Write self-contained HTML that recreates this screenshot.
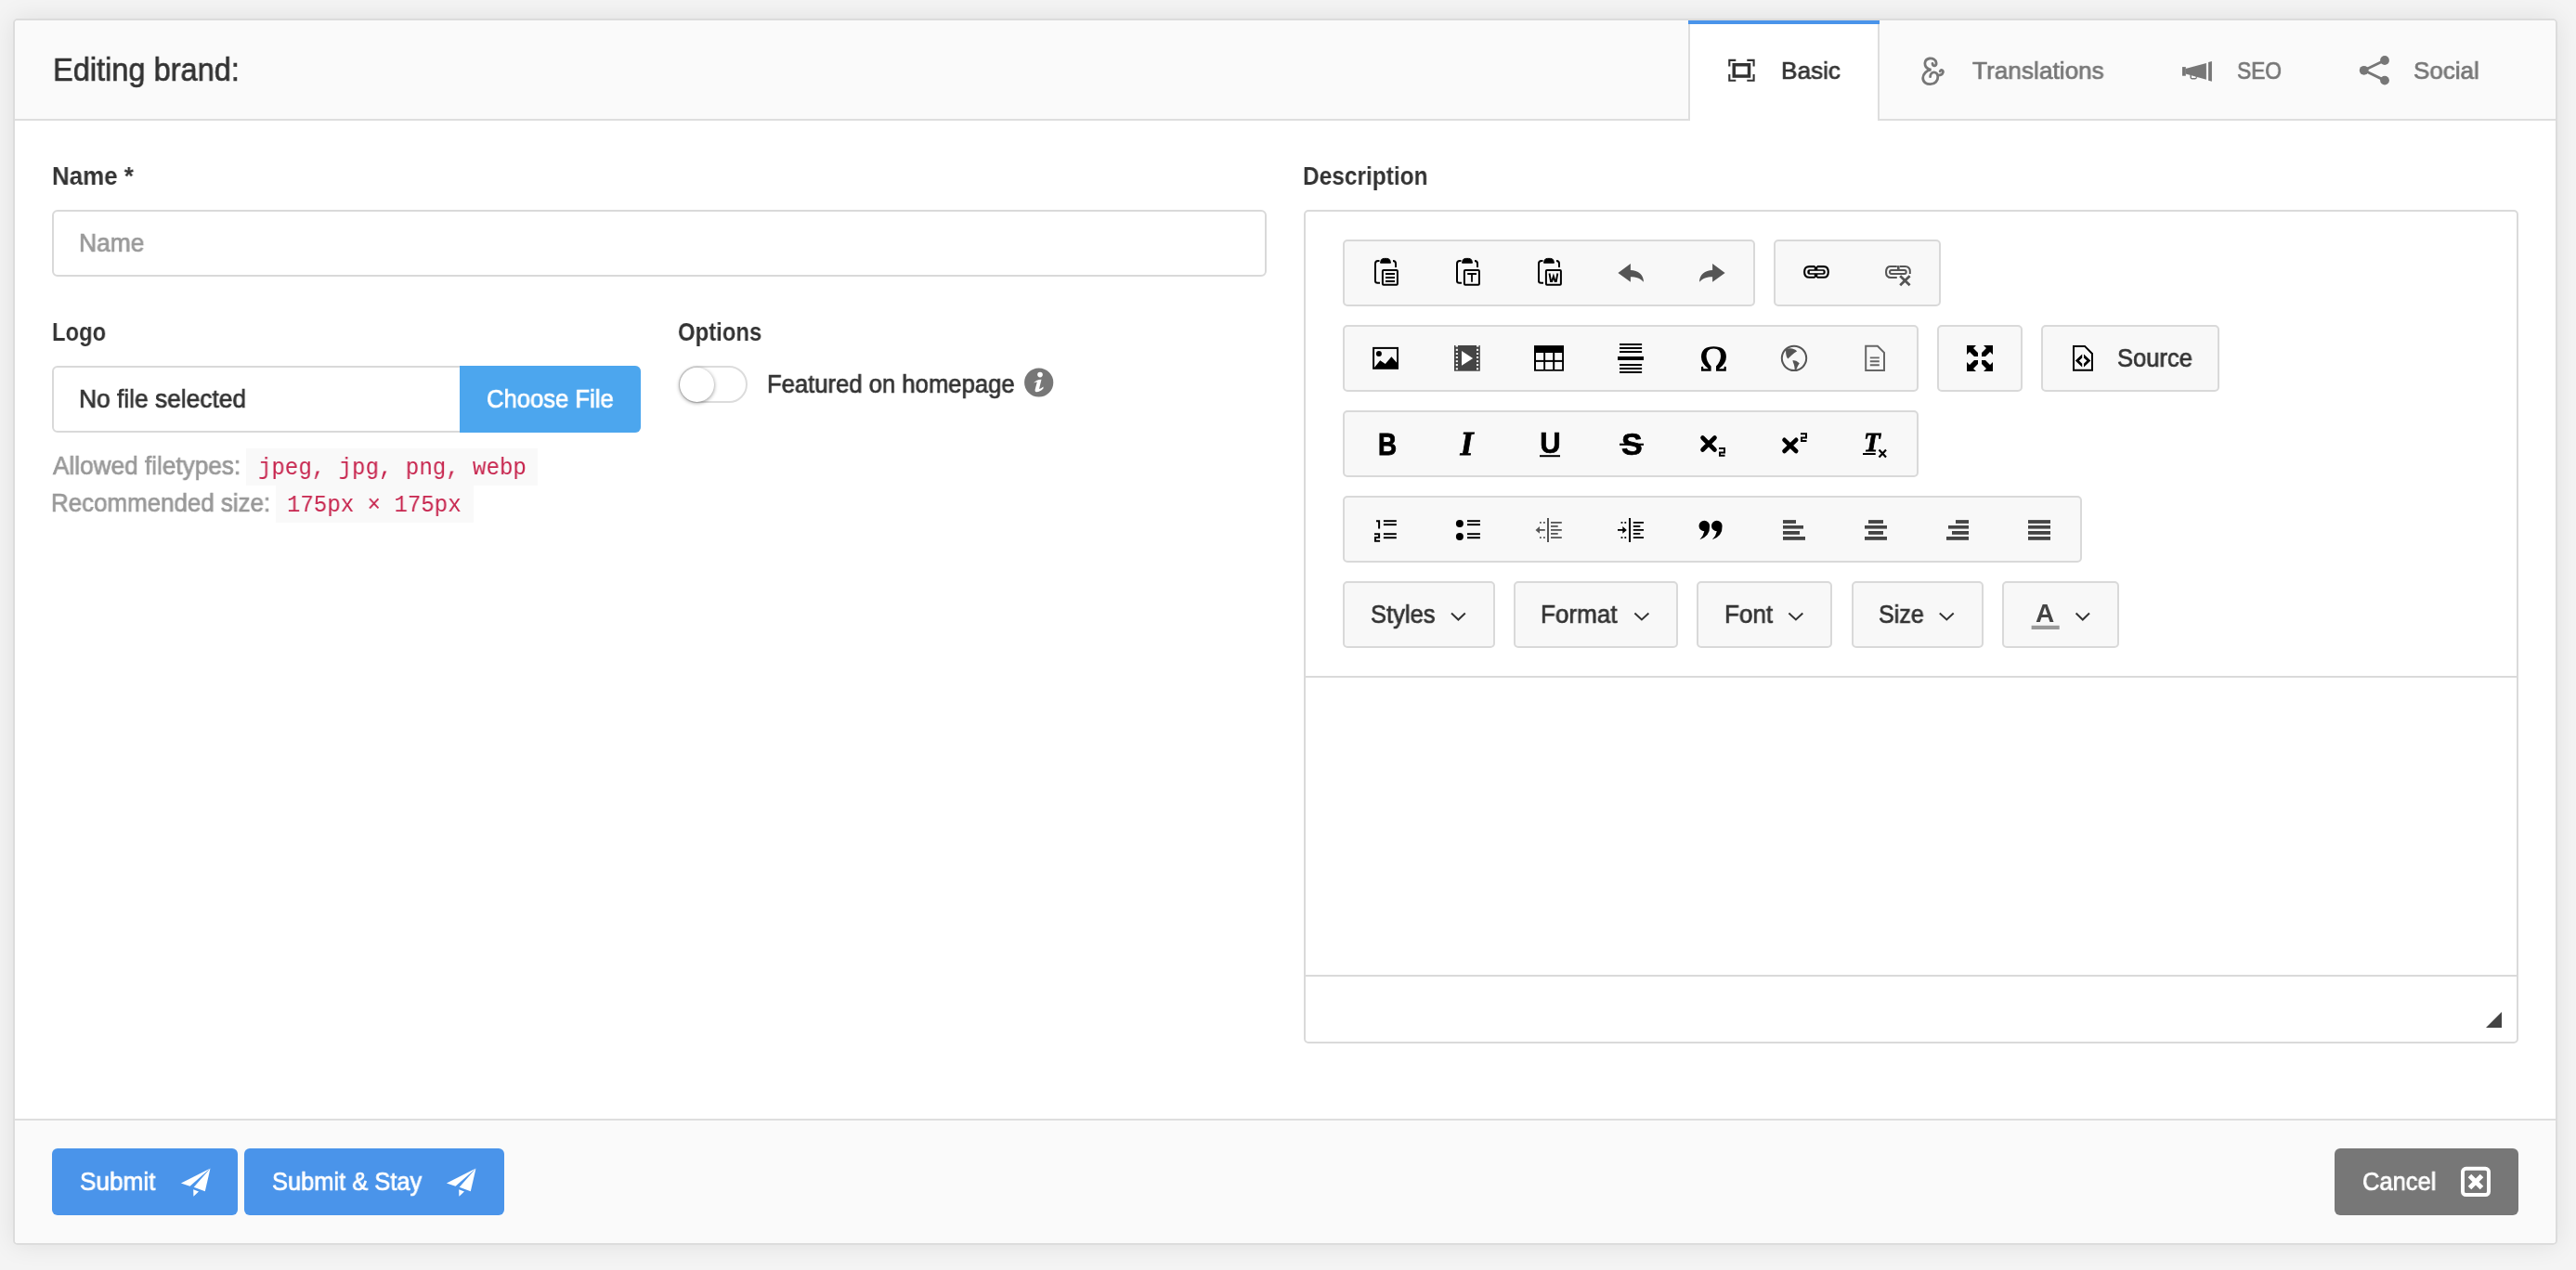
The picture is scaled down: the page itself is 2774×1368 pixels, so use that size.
<!DOCTYPE html>
<html><head><meta charset="utf-8">
<style>
*{box-sizing:border-box;margin:0;padding:0}
html,body{width:2774px;height:1368px;overflow:hidden}
body{background:#f4f4f4;font-family:"Liberation Sans",sans-serif;color:#333;position:relative}
.b{position:absolute}
.tx{position:absolute;white-space:nowrap;transform-origin:0 0;will-change:transform}
.card{left:14px;top:20px;width:2740px;height:1321px;border:2px solid #dcdcdc;border-radius:5px;background:#fff;box-shadow:0 0 28px rgba(0,0,0,.09)}
.inp{border:2px solid #d9d9d9;border-radius:6px;background:#fff}
.grp{border:2px solid #d9d9d9;border-radius:5px;background:#f8f8f8;height:72px}
.code{background:#f9f9f9}
svg{position:absolute;left:0;top:0}
</style></head><body>
<div class="b card"></div>
<div class="b" style="left:16px;top:22px;width:2736px;height:108px;background:#fafafa;border-bottom:2px solid #dedede;border-radius:3px 3px 0 0"></div>
<div class="b" style="left:1818px;top:22px;width:206px;height:108px;background:#fff;border-left:2px solid #dedede;border-right:2px solid #dedede"></div>
<div class="b" style="left:1818px;top:22px;width:206px;height:4px;background:#4a94ea"></div>

<div class="b inp" style="left:56px;top:226px;width:1308px;height:72px"></div>
<div class="b inp" style="left:56px;top:394px;width:634px;height:72px"></div>
<div class="b" style="left:495px;top:394px;width:195px;height:72px;background:#4ca6ee;border-radius:0 6px 6px 0"></div>
<div class="b code" style="left:265px;top:483px;width:314px;height:40px"></div>
<div class="b code" style="left:297px;top:523px;width:213px;height:40px"></div>

<div class="b" style="left:731px;top:394px;width:74px;height:40px;border:2px solid #dcdcdc;border-radius:20px;background:#fff"></div>
<div class="b" style="left:731.5px;top:395.5px;width:37px;height:37px;border-radius:50%;background:#fff;box-shadow:0 1px 4px rgba(0,0,0,.45)"></div>

<div class="b" style="left:1404px;top:226px;width:1308px;height:898px;border:2px solid #dadada;border-radius:5px;background:#fff"></div>
<div class="b" style="left:1406px;top:728px;width:1304px;height:2px;background:#dadada"></div>
<div class="b" style="left:1406px;top:1050px;width:1304px;height:2px;background:#dadada"></div>

<div class="b grp" style="left:1446px;top:258px;width:444px"></div>
<div class="b grp" style="left:1910px;top:258px;width:180px"></div>
<div class="b grp" style="left:1446px;top:350px;width:620px"></div>
<div class="b grp" style="left:2086px;top:350px;width:92px"></div>
<div class="b grp" style="left:2198px;top:350px;width:192px"></div>
<div class="b grp" style="left:1446px;top:442px;width:620px"></div>
<div class="b grp" style="left:1446px;top:534px;width:796px"></div>
<div class="b grp" style="left:1446px;top:626px;width:164px"></div>
<div class="b grp" style="left:1630px;top:626px;width:177px"></div>
<div class="b grp" style="left:1827px;top:626px;width:146px"></div>
<div class="b grp" style="left:1994px;top:626px;width:142px"></div>
<div class="b grp" style="left:2156px;top:626px;width:126px"></div>

<div class="b" style="left:16px;top:1205px;width:2736px;height:134px;background:#fafafa;border-top:2px solid #dedede;border-radius:0 0 3px 3px"></div>
<div class="b" style="left:56px;top:1237px;width:200px;height:72px;background:#4a94ea;border-radius:6px"></div>
<div class="b" style="left:263px;top:1237px;width:280px;height:72px;background:#4a94ea;border-radius:6px"></div>
<div class="b" style="left:2514px;top:1237px;width:198px;height:72px;background:#777;border-radius:6px"></div>

<div class="tx" style="left:56.9px;top:57.8px;font-family:'Liberation Sans';font-weight:400;font-size:35.5px;line-height:35.5px;color:#333;transform:scaleX(0.9168);-webkit-text-stroke:0.7px #333">Editing brand:</div>
<div class="tx" style="left:1918.0px;top:62.9px;font-family:'Liberation Sans';font-weight:400;font-size:26.5px;line-height:26.5px;color:#333;transform:scaleX(0.9871);-webkit-text-stroke:0.7px #333">Basic</div>
<div class="tx" style="left:2124.0px;top:62.9px;font-family:'Liberation Sans';font-weight:400;font-size:26.5px;line-height:26.5px;color:#777;transform:scaleX(0.9888);-webkit-text-stroke:0.7px #777">Translations</div>
<div class="tx" style="left:2408.8px;top:62.9px;font-family:'Liberation Sans';font-weight:400;font-size:26.5px;line-height:26.5px;color:#777;transform:scaleX(0.8574);-webkit-text-stroke:0.7px #777">SEO</div>
<div class="tx" style="left:2599.0px;top:62.9px;font-family:'Liberation Sans';font-weight:400;font-size:26.5px;line-height:26.5px;color:#777;transform:scaleX(0.9800);-webkit-text-stroke:0.7px #777">Social</div>
<div class="tx" style="left:55.5px;top:177.0px;font-family:'Liberation Sans';font-weight:700;font-size:27px;line-height:27px;color:#333;transform:scaleX(0.9596);">Name *</div>
<div class="tx" style="left:85.2px;top:249.0px;font-family:'Liberation Sans';font-weight:400;font-size:27px;line-height:27px;color:#999;transform:scaleX(0.9768);-webkit-text-stroke:0.7px #999">Name</div>
<div class="tx" style="left:56.1px;top:345.0px;font-family:'Liberation Sans';font-weight:700;font-size:27px;line-height:27px;color:#333;transform:scaleX(0.8810);">Logo</div>
<div class="tx" style="left:730.2px;top:345.3px;font-family:'Liberation Sans';font-weight:700;font-size:27px;line-height:27px;color:#333;transform:scaleX(0.8850);">Options</div>
<div class="tx" style="left:85.0px;top:416.8px;font-family:'Liberation Sans';font-weight:400;font-size:27px;line-height:27px;color:#333;transform:scaleX(0.9757);-webkit-text-stroke:0.7px #333">No file selected</div>
<div class="tx" style="left:524.1px;top:416.8px;font-family:'Liberation Sans';font-weight:400;font-size:27px;line-height:27px;color:#fff;transform:scaleX(0.9493);-webkit-text-stroke:0.7px #fff">Choose File</div>
<div class="tx" style="left:825.8px;top:400.6px;font-family:'Liberation Sans';font-weight:400;font-size:27px;line-height:27px;color:#333;transform:scaleX(0.9496);-webkit-text-stroke:0.7px #333">Featured on homepage</div>
<div class="tx" style="left:56.7px;top:488.9px;font-family:'Liberation Sans';font-weight:400;font-size:27px;line-height:27px;color:#999;transform:scaleX(0.9696);-webkit-text-stroke:0.7px #999">Allowed filetypes:</div>
<div class="tx" style="left:54.8px;top:528.9px;font-family:'Liberation Sans';font-weight:400;font-size:27px;line-height:27px;color:#999;transform:scaleX(0.9599);-webkit-text-stroke:0.7px #999">Recommended size:</div>
<div class="tx" style="left:1402.8px;top:177.3px;font-family:'Liberation Sans';font-weight:700;font-size:27px;line-height:27px;color:#333;transform:scaleX(0.9062);">Description</div>
<div class="tx" style="left:1476.0px;top:649.3px;font-family:'Liberation Sans';font-weight:400;font-size:27px;line-height:27px;color:#333;transform:scaleX(0.9458);-webkit-text-stroke:0.7px #333">Styles</div>
<div class="tx" style="left:1659.4px;top:649.3px;font-family:'Liberation Sans';font-weight:400;font-size:27px;line-height:27px;color:#333;transform:scaleX(0.9655);-webkit-text-stroke:0.7px #333">Format</div>
<div class="tx" style="left:1856.8px;top:649.3px;font-family:'Liberation Sans';font-weight:400;font-size:27px;line-height:27px;color:#333;transform:scaleX(0.9654);-webkit-text-stroke:0.7px #333">Font</div>
<div class="tx" style="left:2023.1px;top:649.3px;font-family:'Liberation Sans';font-weight:400;font-size:27px;line-height:27px;color:#333;transform:scaleX(0.9294);-webkit-text-stroke:0.7px #333">Size</div>
<div class="tx" style="left:2279.6px;top:373.2px;font-family:'Liberation Sans';font-weight:400;font-size:27px;line-height:27px;color:#333;transform:scaleX(0.9464);-webkit-text-stroke:0.7px #333">Source</div>
<div class="tx" style="left:85.7px;top:1260.0px;font-family:'Liberation Sans';font-weight:400;font-size:27px;line-height:27px;color:#fff;transform:scaleX(0.9699);-webkit-text-stroke:0.7px #fff">Submit</div>
<div class="tx" style="left:292.6px;top:1260.0px;font-family:'Liberation Sans';font-weight:400;font-size:27px;line-height:27px;color:#fff;transform:scaleX(0.9429);-webkit-text-stroke:0.7px #fff">Submit &amp; Stay</div>
<div class="tx" style="left:2543.9px;top:1260.0px;font-family:'Liberation Sans';font-weight:400;font-size:27px;line-height:27px;color:#fff;transform:scaleX(0.9451);-webkit-text-stroke:0.7px #fff">Cancel</div>
<div class="tx" style="left:278.2px;top:491.9px;font-family:'Liberation Mono';font-weight:400;font-size:25.5px;line-height:25.5px;color:#c7254e;transform:scaleX(0.9436);">jpeg, jpg, png, webp</div>
<div class="tx" style="left:309.3px;top:532.0px;font-family:'Liberation Mono';font-weight:400;font-size:25.5px;line-height:25.5px;color:#c7254e;transform:scaleX(0.9429);">175px × 175px</div>
<svg width="2774" height="1368" viewBox="0 0 2774 1368">
<!-- header: basic icon -->
<g fill="none" stroke="#333">
  <rect x="1867.25" y="69.75" width="16.25" height="12.3" stroke-width="3.5"/>
  <path stroke-width="2.1" d="M1862.3 71.5V64.9H1869.3 M1881.3 64.9H1888.6V71.5 M1888.6 80V86.8H1881.3 M1869.3 86.8H1862.3V80"/>
</g>
<path d="M2081 68.3Q2081.3 70.9 2083.3 70.8Q2085.3 70.5 2085.1 67.8C2084.7 64.5 2081.5 62.7 2077.8 63C2073 63.6 2072.3 68 2073.2 70.5C2074 72.8 2076.5 74.5 2079.5 75.2C2074.5 75.8 2070.8 79.5 2070.7 84C2070.7 88.5 2074.5 90.8 2078.8 90.7C2083.8 90.6 2087 86.8 2086.8 82.8C2086.6 79.5 2084.6 77.8 2082.6 77.9C2080.2 78 2078.6 80.2 2078.6 82.7M2086.3 80.6C2088.5 81.3 2091.6 80.8 2092.3 78.2C2092.9 75.8 2090.5 74.2 2089.2 76.8" fill="none" stroke="#777" stroke-width="2.8" stroke-linecap="round"/>
<!-- megaphone -->
<g fill="#777">
  <rect x="2350" y="72.1" width="3.8" height="9.6"/>
  <path d="M2353.5 74.1L2375.9 68.1V85.7L2353.5 79.6Z"/>
  <path d="M2378.1 67.1L2381.9 66V87.7L2378.1 86.7Z"/>
  <path d="M2358.4 80.8V83.6Q2358.4 85.4 2360.3 85.4H2364Q2365.9 85.4 2365.9 83.6V82.2L2364.6 81.9V83.9H2359.9V81.2Z"/>
</g>
<!-- share -->
<g fill="#777" stroke="#777">
  <circle cx="2568" cy="65" r="4.9" stroke="none"/>
  <circle cx="2545.7" cy="75.8" r="4.9" stroke="none"/>
  <circle cx="2568" cy="86.6" r="4.9" stroke="none"/>
  <path d="M2545.7 75.8 L2568 65 M2545.7 75.8 L2568 86.6" stroke-width="2.9"/>
</g>
<!-- info -->
<circle cx="1118.7" cy="412" r="15.6" fill="#777"/>
<circle cx="1120" cy="403.6" r="2.8" fill="#fff"/>
<path d="M1113 412.5 Q1116 409 1121.5 408.7 L1119 419 Q1121 418.5 1123.5 416.5 L1123.5 418.5 Q1119.5 422.5 1116 422.3 Q1114 422 1114.8 419 L1116.8 411.5 Q1115 411.6 1113 412.5Z" fill="#fff"/>

<!-- toolbar row1 -->
<g id="paste" transform="translate(1477 278)" fill="none" stroke="#000" stroke-width="2">
  <path d="M8.5 3.1H7Q4 3.1 4 6.1V24.7Q4 26.7 6.5 26.7H9"/>
  <path d="M23 3.1Q26 3.1 26 6.1V10"/>
  <path d="M9.5 5.2L10.3 2.2Q11 0.4 13.5 0.4H16.5Q19 0.4 19.7 2.2L20.5 5.2Z" fill="#000" stroke-width="1"/>
  <rect x="11.9" y="13.1" width="16" height="15.6" rx="1"/>
  <path d="M15 17H25M15 21H25M15 25H25" stroke-width="1.8"/>
</g>
<g transform="translate(1565 278)" fill="none" stroke="#000" stroke-width="2">
  <path d="M8.5 3.1H7Q4 3.1 4 6.1V24.7Q4 26.7 6.5 26.7H9"/>
  <path d="M23 3.1Q26 3.1 26 6.1V10"/>
  <path d="M9.5 5.2L10.3 2.2Q11 0.4 13.5 0.4H16.5Q19 0.4 19.7 2.2L20.5 5.2Z" fill="#000" stroke-width="1"/>
  <rect x="11.9" y="13.1" width="16" height="15.6" rx="1"/>
  <path d="M15.2 17H25M20 17V25.7" stroke-width="1.8"/>
</g>
<g transform="translate(1653 278)" fill="none" stroke="#000" stroke-width="2">
  <path d="M8.5 3.1H7Q4 3.1 4 6.1V24.7Q4 26.7 6.5 26.7H9"/>
  <path d="M23 3.1Q26 3.1 26 6.1V10"/>
  <path d="M9.5 5.2L10.3 2.2Q11 0.4 13.5 0.4H16.5Q19 0.4 19.7 2.2L20.5 5.2Z" fill="#000" stroke-width="1"/>
  <rect x="11.9" y="13.1" width="16" height="15.6" rx="1"/>
  <path d="M15.5 16.5L17 25H18.2L19.9 19.5L21.6 25H22.8L24.3 16.5" stroke-width="1.9"/>
</g>
<path transform="translate(1741 278)" d="M1.4 15.9L14.9 6.1V12.9C23 12.9 29 18 29 25.7C25.5 21.8 21 20.2 14.9 20.2V25.7Z" fill="#555"/>
<path transform="translate(1859 278) scale(-1 1)" d="M1.4 15.9L14.9 6.1V12.9C23 12.9 29 18 29 25.7C25.5 21.8 21 20.2 14.9 20.2V25.7Z" fill="#555"/>
<g transform="translate(1941 277)" fill="none" stroke="#000" stroke-width="2.1">
  <path d="M13.2 10.1H7.5Q2.1 10.1 2.1 16Q2.1 21.8 7.5 21.8H13.2"/>
  <path d="M16 10.1H23Q27.8 10.1 27.8 16Q27.8 21.8 23 21.8H16"/>
  <path d="M7.5 13.2H22.5Q24.7 13.2 24.7 16Q24.7 18.7 22.5 18.7H7.5Q5.3 18.7 5.3 16Q5.3 13.2 7.5 13.2ZM8 15V17H22.2V15Z" fill="#000" fill-rule="evenodd" stroke="none"/>
  <path d="M12.8 9.1L14.5 10.6L16.3 9.1V22.8L14.5 21.4L12.8 22.8Z" fill="#000" stroke="none"/>
  <rect x="7.8" y="14.8" width="14.5" height="2.4" fill="#f8f8f8" stroke="none"/>
</g>
<g fill="none" stroke="#555" stroke-width="2">
  <path d="M2042.8 287H2036Q2031 287 2031 293Q2031 298.9 2036 298.9H2042.8"/>
  <path d="M2045.8 287H2051.5Q2056.8 287 2056.8 292.5V295"/>
  <rect x="2043" y="286.2" width="2.6" height="4.2" fill="#555" stroke="none"/>
  <rect x="2035" y="291.1" width="17.7" height="3.8" rx="1.9"/>
  <path d="M2047 298L2056 307M2056 298L2047 307" stroke="#f8f8f8" stroke-width="6"/>
  <path d="M2046.2 297.3L2056.6 307.2M2056.6 297.3L2046.2 307.2" stroke-width="2.8"/>
</g>

<!-- row2 -->
<g transform="translate(1477 370)">
  <rect x="2.1" y="4.9" width="25.9" height="21.9" fill="none" stroke="#000" stroke-width="2"/>
  <circle cx="7.9" cy="10.9" r="3" fill="#000"/>
  <path d="M3 26.8V25.9L9.2 18.2L14.8 22L21.4 14.2L27.2 20.7V26.8Z" fill="#000"/>
</g>
<g transform="translate(1565 370)">
  <rect x="1" y="2" width="27.8" height="27.7" fill="#444"/>
  <g fill="#f8f8f8">
    <rect x="2.8" y="5.8" width="2.1" height="2.1"/><rect x="2.8" y="10" width="2.1" height="2"/><rect x="2.8" y="14" width="2.1" height="2"/><rect x="2.8" y="18.2" width="2.1" height="1.9"/><rect x="2.8" y="22" width="2.1" height="2.1"/><rect x="2.8" y="26.3" width="2.1" height="2"/>
    <rect x="25" y="5.8" width="2.1" height="2.1"/><rect x="25" y="10" width="2.1" height="2"/><rect x="25" y="14" width="2.1" height="2"/><rect x="25" y="18.2" width="2.1" height="1.9"/><rect x="25" y="22" width="2.1" height="2.1"/><rect x="25" y="26.3" width="2.1" height="2"/>
    <rect x="2.5" y="2" width="2.5" height="1.6"/><rect x="25" y="2" width="2.5" height="1.6"/>
    <path d="M9 7.9L21.1 16L9 23.7Z" fill="#fff"/>
  </g>
</g>
<g transform="translate(1652 370)">
  <rect x="0" y="2.1" width="32" height="27.6" fill="#000"/>
  <g fill="#f8f8f8">
    <rect x="2" y="10" width="8.2" height="7.9"/><rect x="12.1" y="10" width="8.1" height="7.9"/><rect x="22.2" y="10" width="7.9" height="7.9"/>
    <rect x="2" y="19.9" width="8.2" height="8.1"/><rect x="12.1" y="19.9" width="8.1" height="8.1"/><rect x="22.2" y="19.9" width="7.9" height="8.1"/>
  </g>
</g>
<g transform="translate(1741 370)" fill="#000">
  <rect x="3" y="0" width="24.1" height="2"/><rect x="3" y="4" width="24.1" height="2"/><rect x="3" y="8" width="24.1" height="2"/>
  <rect x="1" y="14" width="28" height="4"/>
  <rect x="3" y="22" width="24.1" height="2"/><rect x="3" y="26" width="24.1" height="2"/><rect x="3" y="30" width="24.1" height="2"/>
</g>
<path d="M1842.6 399.8H1832V395.5Q1832 394.8 1833.2 394.8Q1834.3 394.8 1834.3 396V397.2H1839.8Q1832 391.5 1832 384.5Q1832 373.2 1845.4 373.2Q1858.9 373.2 1858.9 384.5Q1858.9 391.5 1851 397.2H1856.5V396Q1856.5 394.8 1857.6 394.8Q1858.8 394.8 1858.8 395.5V399.8H1848V394.5Q1853 389.5 1853 383.5Q1853 375.5 1845.4 375.5Q1837.5 375.5 1837.5 383.5Q1837.5 389.5 1842.6 394.5Z" fill="#000"/>
<g fill="#555">
  <circle cx="1932" cy="385.85" r="13.2" fill="none" stroke="#555" stroke-width="2"/>
  <path d="M1923 376.5Q1926 374.8 1930 375.5Q1934 376.5 1935.2 378.3Q1932 380 1929.5 382.5Q1927 385 1925.2 386.5Q1923.5 384.5 1923.2 381Z"/>
  <path d="M1930.5 388Q1934.5 388 1937.8 391.3Q1936 394 1935 396.5L1934 399L1932.8 398.8Q1932.6 395 1931.8 392.5Q1930.5 390 1930.5 388Z"/>
</g>
<g transform="translate(2005 370)" fill="none" stroke="#666" stroke-width="2">
  <path d="M4.2 2.8H16.9L24 9.9V29H4.2Z"/>
  <path d="M8.8 15.4H18.8M8.8 19.3H18.8M8.8 23.2H18.8" stroke-width="1.9"/>
</g>
<g fill="#000">
  <path d="M2118 372H2128L2125 375L2130 380V384H2126L2121 379L2118 382Z"/>
  <path transform="translate(4264 0) scale(-1 1)" d="M2118 372H2128L2125 375L2130 380V384H2126L2121 379L2118 382Z"/>
  <path transform="translate(0 772) scale(1 -1)" d="M2118 372H2128L2125 375L2130 380V384H2126L2121 379L2118 382Z"/>
  <path transform="translate(4264 772) scale(-1 -1)" d="M2118 372H2128L2125 375L2130 380V384H2126L2121 379L2118 382Z"/>
</g>
<g fill="none" stroke="#000" stroke-width="2">
  <path d="M2233 372.9H2245L2253 381V398.8H2233Z"/>
</g>
<path d="M2242.2 381.6L2234.8 388.6L2242.2 395.5V391.8L2238.9 388.6L2242.2 385.4Z" fill="#000"/>
<path d="M2244 381.6L2251.4 388.6L2244 395.5V391.8L2247.3 388.6L2244 385.4Z" fill="#000"/>

<!-- row3 -->
<text transform="translate(1484 490) scale(0.82 1)" font-family="Liberation Sans" font-weight="bold" font-size="34" fill="#000" stroke="#000" stroke-width="0.9">B</text>
<text x="1572.5" y="490" font-family="Liberation Serif" font-weight="bold" font-style="italic" font-size="36" fill="#000" stroke="#000" stroke-width="0.8">I</text>
<text x="1658.3" y="488" font-family="Liberation Sans" font-weight="bold" font-size="31" fill="#000" stroke="#000" stroke-width="0.7">U</text>
<rect x="1658" y="490.2" width="22" height="2" fill="#000"/>
<text x="1746" y="490" font-family="Liberation Sans" font-weight="bold" font-size="34" fill="#000" stroke="#000" stroke-width="0.7">S</text>
<rect x="1744" y="477.7" width="26" height="2.1" fill="#000"/>
<g stroke="#000" stroke-width="4.6" stroke-linecap="round">
  <path d="M1833.5 471.5L1846.5 484.5M1846.5 471.5L1833.5 484.5"/>
  <path d="M1921.5 473.8L1934.2 486M1934.2 473.8L1921.5 486"/>
  <path d="M2023.5 484.5L2031 492.5M2031 484.5L2023.5 492.5" stroke-width="2.2" stroke-linecap="butt"/>
</g>
<path d="M1851 483H1857V487.5H1852V490.8H1857.5" fill="none" stroke="#000" stroke-width="2"/>
<path d="M1939 467.2H1945V471.5H1940V475H1945.5" fill="none" stroke="#000" stroke-width="2"/>
<text x="2007" y="486.2" font-family="Liberation Serif" font-weight="bold" font-style="italic" font-size="29" fill="#000" stroke="#000" stroke-width="0.8">T</text>
<rect x="2006" y="488" width="13.7" height="2" fill="#000"/>

<!-- row4 -->
<g fill="#000">
  <path d="M1482 561.2H1485.1V569.6" fill="none" stroke="#000" stroke-width="2"/>
  <path d="M1480 575.2H1485.1V578.9H1481V582.8H1486.1" fill="none" stroke="#000" stroke-width="2"/>
  <rect x="1489.9" y="560.2" width="13.9" height="2"/><rect x="1489.9" y="564.1" width="13.9" height="2"/>
  <rect x="1489.9" y="574.2" width="13.9" height="2"/><rect x="1489.9" y="578.2" width="13.9" height="2"/>
  <circle cx="1571.9" cy="563.9" r="4"/><circle cx="1571.9" cy="578" r="4"/>
  <rect x="1580" y="560.2" width="13.9" height="2"/><rect x="1580" y="564.1" width="13.9" height="2"/>
  <rect x="1580" y="574.2" width="13.9" height="2"/><rect x="1580" y="578.2" width="13.9" height="2"/>
</g>
<g fill="#555">
  <rect x="1666" y="558" width="2" height="26"/>
  <rect x="1670" y="562" width="11.8" height="1.8"/><rect x="1670" y="566" width="7.7" height="1.8"/><rect x="1670" y="570" width="11.8" height="1.8"/><rect x="1670" y="574" width="7.7" height="1.8"/><rect x="1670" y="578.2" width="11.8" height="1.8"/>
  <rect x="1658" y="562" width="1.8" height="1.8"/><rect x="1662" y="562" width="1.8" height="1.8"/><rect x="1658" y="578.2" width="1.8" height="1.8"/><rect x="1662" y="578.2" width="1.8" height="1.8"/>
  <rect x="1656" y="570" width="7.8" height="1.8"/>
  <path d="M1653.5 570.9L1658 567V574.8Z"/>
</g>
<g fill="#000">
  <rect x="1754" y="558" width="2" height="26"/>
  <rect x="1758.8" y="562" width="11.2" height="1.8"/><rect x="1758.8" y="566" width="7.5" height="1.8"/><rect x="1758.8" y="570" width="11.2" height="1.8"/><rect x="1758.8" y="574" width="7.5" height="1.8"/><rect x="1758.8" y="578.2" width="11.2" height="1.8"/>
  <rect x="1745.6" y="562" width="1.8" height="1.8"/><rect x="1749.4" y="562" width="1.8" height="1.8"/><rect x="1745.6" y="578.2" width="1.8" height="1.8"/><rect x="1749.4" y="578.2" width="1.8" height="1.8"/>
  <rect x="1742" y="570" width="6" height="1.8"/>
  <path d="M1751.8 570.9L1747.3 567V574.8Z"/>
</g>
<g fill="#000">
  <path d="M1841.1 566.5A5.8 5.8 0 1 0 1835.3 572.3Q1834.5 577 1830.4 581.2Q1841.6 577.5 1841.1 566.5Z"/>
  <path d="M1854.6 566.5A5.8 5.8 0 1 0 1848.8 572.3Q1848 577 1843.9 581.2Q1855.1 577.5 1854.6 566.5Z"/>
</g>
<g fill="#444">
  <rect x="1920" y="560.1" width="14" height="3.8"/><rect x="1920" y="566" width="22" height="3.6"/><rect x="1920" y="572" width="18" height="3.8"/><rect x="1920" y="578" width="24" height="3.8"/>
  <rect x="2012" y="560.1" width="16" height="3.8"/><rect x="2008" y="566" width="24" height="3.6"/><rect x="2012" y="572" width="16" height="3.8"/><rect x="2008" y="578" width="24" height="3.8"/>
  <rect x="2106" y="560.1" width="14" height="3.8"/><rect x="2098" y="566" width="22" height="3.6"/><rect x="2102" y="572" width="18" height="3.8"/><rect x="2096" y="578" width="24" height="3.8"/>
  <rect x="2184" y="560.1" width="24" height="3.8"/><rect x="2184" y="566" width="24" height="3.6"/><rect x="2184" y="572" width="24" height="3.8"/><rect x="2184" y="578" width="24" height="3.8"/>
</g>

<!-- row5 chevrons -->
<g fill="none" stroke="#333" stroke-width="2">
  <path d="M1563 660.5L1570.4 667.5L1577.8 660.5"/>
  <path d="M1760.4 660.5L1767.9 667.5L1775.4 660.5"/>
  <path d="M1926.4 660.5L1933.9 667.5L1941.3 660.5"/>
  <path d="M2088.8 660.5L2096.3 667.5L2103.7 660.5"/>
  <path d="M2235.6 660.5L2242.8 667.5L2250 660.5"/>
</g>
<text x="2192" y="669.8" font-family="Liberation Sans" font-weight="bold" font-size="28" fill="#444">A</text>
<rect x="2187.6" y="673.8" width="30.1" height="4.2" fill="#999"/>

<!-- resize -->
<path d="M2694 1090V1107H2677Z" fill="#444"/>

<!-- footer icons -->
<g fill="#fff">
  <path d="M226.5 1258.5L194.9 1274.5L204.5 1277.7Z"/>
  <path d="M226.5 1258.5L208.7 1278.7L220.8 1283.3Z"/>
  <path d="M208.2 1281.2L214 1283.5L208.4 1288.8Z"/>
  <path d="M512.5 1258.5L480.9 1274.5L490.5 1277.7Z"/>
  <path d="M512.5 1258.5L494.7 1278.7L506.8 1283.3Z"/>
  <path d="M494.2 1281.2L500 1283.5L494.4 1288.8Z"/>
</g>
<g fill="none" stroke="#fff">
  <rect x="2652" y="1258.8" width="28" height="28.2" rx="3.5" stroke-width="4"/>
  <path d="M2659.5 1266.5L2672.5 1279.5M2672.5 1266.5L2659.5 1279.5" stroke-width="5"/>
</g>
</svg>

</body></html>
